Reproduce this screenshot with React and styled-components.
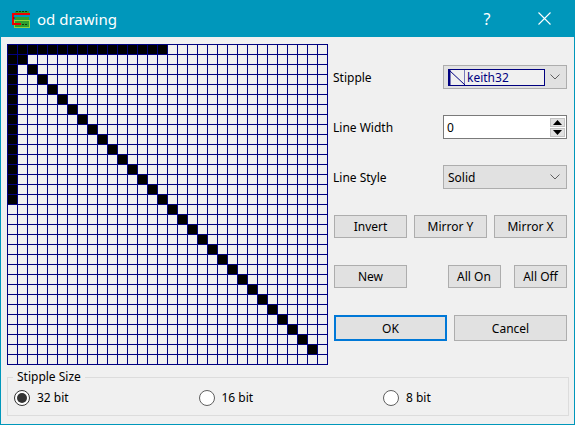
import React from 'react';
import styled, { createGlobalStyle } from 'styled-components';

const GlobalStyle = createGlobalStyle`
  html, body {
    margin: 0;
    padding: 0;
    background: #f0f0f0;
  }
  * {
    box-sizing: border-box;
  }
`;

const Window = styled.div`
  width: 575px;
  height: 425px;
  display: flex;
  flex-flow: column;
  overflow: hidden;
  background: #f0f0f0;
  border: 1px solid #0097bb;
  border-top: 0;
  font-family: 'Noto Sans', 'Open Sans', sans-serif;
  font-size: 12px;
  color: #000;
`;

const TitleBar = styled.div`
  flex: none;
  height: 37px;
  display: flex;
  align-items: center;
  padding-left: 10px;
  background: #0097bb;
  color: #fff;
`;

const TitleText = styled.span`
  margin-left: 6px;
  font-size: 15px;
  flex: 1;
`;

const HelpGlyph = styled.span`
  width: 46px;
  margin-right: 11px;
  text-align: center;
  font-size: 16px;
`;

const CloseButton = styled.span`
  width: 46px;
  margin-right: 7px;
  display: flex;
  justify-content: center;
`;

const Content = styled.div`
  flex: 1;
  display: flex;
  flex-flow: column;
  padding: 7px 7px 7px 6px;
`;

const TopArea = styled.div`
  display: flex;
`;

const StippleGrid = styled.div`
  display: grid;
  grid-template-columns: repeat(32, 9px);
  grid-auto-rows: 9px;
  gap: 1px;
  width: 321px;
  height: 321px;
  padding: 1px;
  background: #000080;
`;

const Cell = styled.div`
  background: ${(props) => (props.$on ? '#000' : '#f0f0f0')};
`;

const Controls = styled.div`
  width: 234px;
  margin-left: 5px;
  padding-top: 21px;
  display: flex;
  flex-flow: column;
`;

const FieldRow = styled.div`
  height: 50px;
  display: grid;
  grid-template-columns: 110px 124px;
  align-items: start;
`;

const FieldLabel = styled.label`
  height: 24px;
  line-height: 26px;
`;

const Combo = styled.div`
  height: 24px;
  display: flex;
  align-items: center;
  padding-left: ${(props) => (props.$plain ? '4px' : '4px')};
  background: #e1e1e1;
  border: 1px solid #adadad;
`;

const ComboSelection = styled.div`
  width: 97px;
  height: 17px;
  display: flex;
  align-items: center;
  background: #f0f0f0;
  border: 1px solid #000080;
  color: #000080;
`;

const StipplePreview = styled.svg`
  width: 16px;
  height: 15px;
  margin-right: 2px;
  flex: none;
`;

const ComboText = styled.span`
  flex: 1;
`;

const Chevron = styled.svg`
  width: 10px;
  height: 6px;
  margin-left: auto;
  margin-right: 6px;
  flex: none;
`;

const SpinBox = styled.div`
  height: 24px;
  display: flex;
  align-items: center;
  padding: 0 1px 0 3px;
  background: #fff;
  border: 1px solid #7a7a7a;
`;

const SpinValue = styled.span`
  flex: 1;
`;

const SpinButtons = styled.div`
  width: 15px;
  display: flex;
  flex-flow: column;
  gap: 1px;
`;

const SpinButton = styled.div`
  height: 9px;
  display: flex;
  align-items: center;
  justify-content: center;
  background: #e1e1e1;
  border: 1px solid #c4c4c4;
`;

const ButtonRow = styled.div`
  height: 50px;
  display: flex;
  justify-content: space-between;
  align-items: flex-start;
  padding-left: 1px;
`;

const Button = styled.button`
  width: ${(props) => props.$width}px;
  height: ${(props) => (props.$tall ? 26 : 23)}px;
  padding: 0;
  background: #e1e1e1;
  border: ${(props) => (props.$default ? '2px solid #0078d7' : '1px solid #adadad')};
  font: inherit;
  color: #000;
`;

const GroupBox = styled.fieldset`
  margin: 4px 0 0 0;
  padding: 0;
  height: 47px;
  border: 1px solid #dcdcdc;
  display: grid;
`;

const GroupTitle = styled.legend`
  margin-left: 5px;
  padding: 0 4px;
  line-height: 16px;
`;

const RadioRow = styled.div`
  display: grid;
  grid-template-columns: repeat(3, 184.5px);
  padding: 4px 0 0 6px;
`;

const RadioOption = styled.label`
  display: flex;
  align-items: center;
  gap: 7px;
`;

const RadioCircle = styled.span`
  width: 16px;
  height: 16px;
  display: flex;
  align-items: center;
  justify-content: center;
  background: #fff;
  border: 1px solid ${(props) => (props.$checked ? '#333' : '#5f5f5f')};
  border-radius: 50%;

  &::after {
    content: '';
    display: ${(props) => (props.$checked ? 'block' : 'none')};
    width: 10px;
    height: 10px;
    background: #333;
    border-radius: 50%;
  }
`;

// the stipple bitmap: top bar, left bar and the long diagonal
const isSet = (row, col) =>
  (row === 0 && col < 16) || (col === 0 && row < 16) || (row === col && row < 31) || (row === 1 && col === 1);

const cells = [];
for (let row = 0; row < 32; row += 1) {
  for (let col = 0; col < 32; col += 1) {
    cells.push(isSet(row, col));
  }
}

const AppIcon = () => (
  <svg width="20" height="20" viewBox="0 0 20 20" fill="none">
    <rect x="3" y="11" width="16" height="8" fill="#8fd63c" />
    <rect x="4" y="12" width="14" height="6" fill="#2f9e2f" />
    <rect x="4" y="2" width="14" height="3" fill="#2f9e2f" />
    <path d="M5 2.5h11M5 10.5h11M5 15.5h11" stroke="#0a3d0a" strokeWidth="1" strokeDasharray="2 1" />
    <rect x="4" y="8" width="14" height="3" fill="#2f9e2f" />
    <path d="M19 5H2v10h8" stroke="#f00000" strokeWidth="2" />
    <path d="M2 9h2" stroke="#7a0000" strokeWidth="1" />
  </svg>
);

const ChevronIcon = () => (
  <Chevron viewBox="0 0 10 6" fill="none">
    <path d="M0.5 0.5L5 5L9.5 0.5" stroke="#606060" strokeWidth="1" />
  </Chevron>
);

const Arrow = ({ down }) => (
  <svg width="9" height="5" viewBox="0 0 9 5">
    <path d={down ? 'M0 0h9L4.5 5z' : 'M0 5h9L4.5 0z'} fill="#000" />
  </svg>
);

const App = () => (
  <Window>
    <GlobalStyle />
    <TitleBar>
      <AppIcon />
      <TitleText>od drawing</TitleText>
      <HelpGlyph>?</HelpGlyph>
      <CloseButton>
        <svg width="13" height="13" viewBox="0 0 13 13" fill="none">
          <path d="M0.5 0.5L12.5 12.5M12.5 0.5L0.5 12.5" stroke="#fff" strokeWidth="1.1" />
        </svg>
      </CloseButton>
    </TitleBar>
    <Content>
      <TopArea>
        <StippleGrid>
          {cells.map((on, index) => (
            <Cell key={index} $on={on} />
          ))}
        </StippleGrid>
        <Controls>
          <FieldRow>
            <FieldLabel>Stipple</FieldLabel>
            <Combo>
              <ComboSelection>
                <StipplePreview viewBox="0 0 16 15" fill="none">
                  <path d="M0 0L16 15M16 0V15" stroke="#000080" strokeWidth="1" />
                  <path d="M0.5 0V15" stroke="#000080" strokeWidth="2" />
                </StipplePreview>
                <ComboText>keith32</ComboText>
              </ComboSelection>
              <ChevronIcon />
            </Combo>
          </FieldRow>
          <FieldRow>
            <FieldLabel>Line Width</FieldLabel>
            <SpinBox>
              <SpinValue>0</SpinValue>
              <SpinButtons>
                <SpinButton>
                  <Arrow />
                </SpinButton>
                <SpinButton>
                  <Arrow down />
                </SpinButton>
              </SpinButtons>
            </SpinBox>
          </FieldRow>
          <FieldRow>
            <FieldLabel>Line Style</FieldLabel>
            <Combo>
              <ComboText>Solid</ComboText>
              <ChevronIcon />
            </Combo>
          </FieldRow>
          <ButtonRow>
            <Button $width={73}>Invert</Button>
            <Button $width={73}>Mirror Y</Button>
            <Button $width={73}>Mirror X</Button>
          </ButtonRow>
          <ButtonRow>
            <Button $width={73}>New</Button>
            <Button $width={53} style={{ marginLeft: 27 }}>
              All On
            </Button>
            <Button $width={53}>All Off</Button>
          </ButtonRow>
          <ButtonRow>
            <Button $width={113} $tall $default>
              OK
            </Button>
            <Button $width={113} $tall>
              Cancel
            </Button>
          </ButtonRow>
        </Controls>
      </TopArea>
      <GroupBox>
        <GroupTitle>Stipple Size</GroupTitle>
        <RadioRow>
          <RadioOption>
            <RadioCircle $checked />
            32 bit
          </RadioOption>
          <RadioOption>
            <RadioCircle />
            16 bit
          </RadioOption>
          <RadioOption>
            <RadioCircle />8 bit
          </RadioOption>
        </RadioRow>
      </GroupBox>
    </Content>
  </Window>
);

export default App;
